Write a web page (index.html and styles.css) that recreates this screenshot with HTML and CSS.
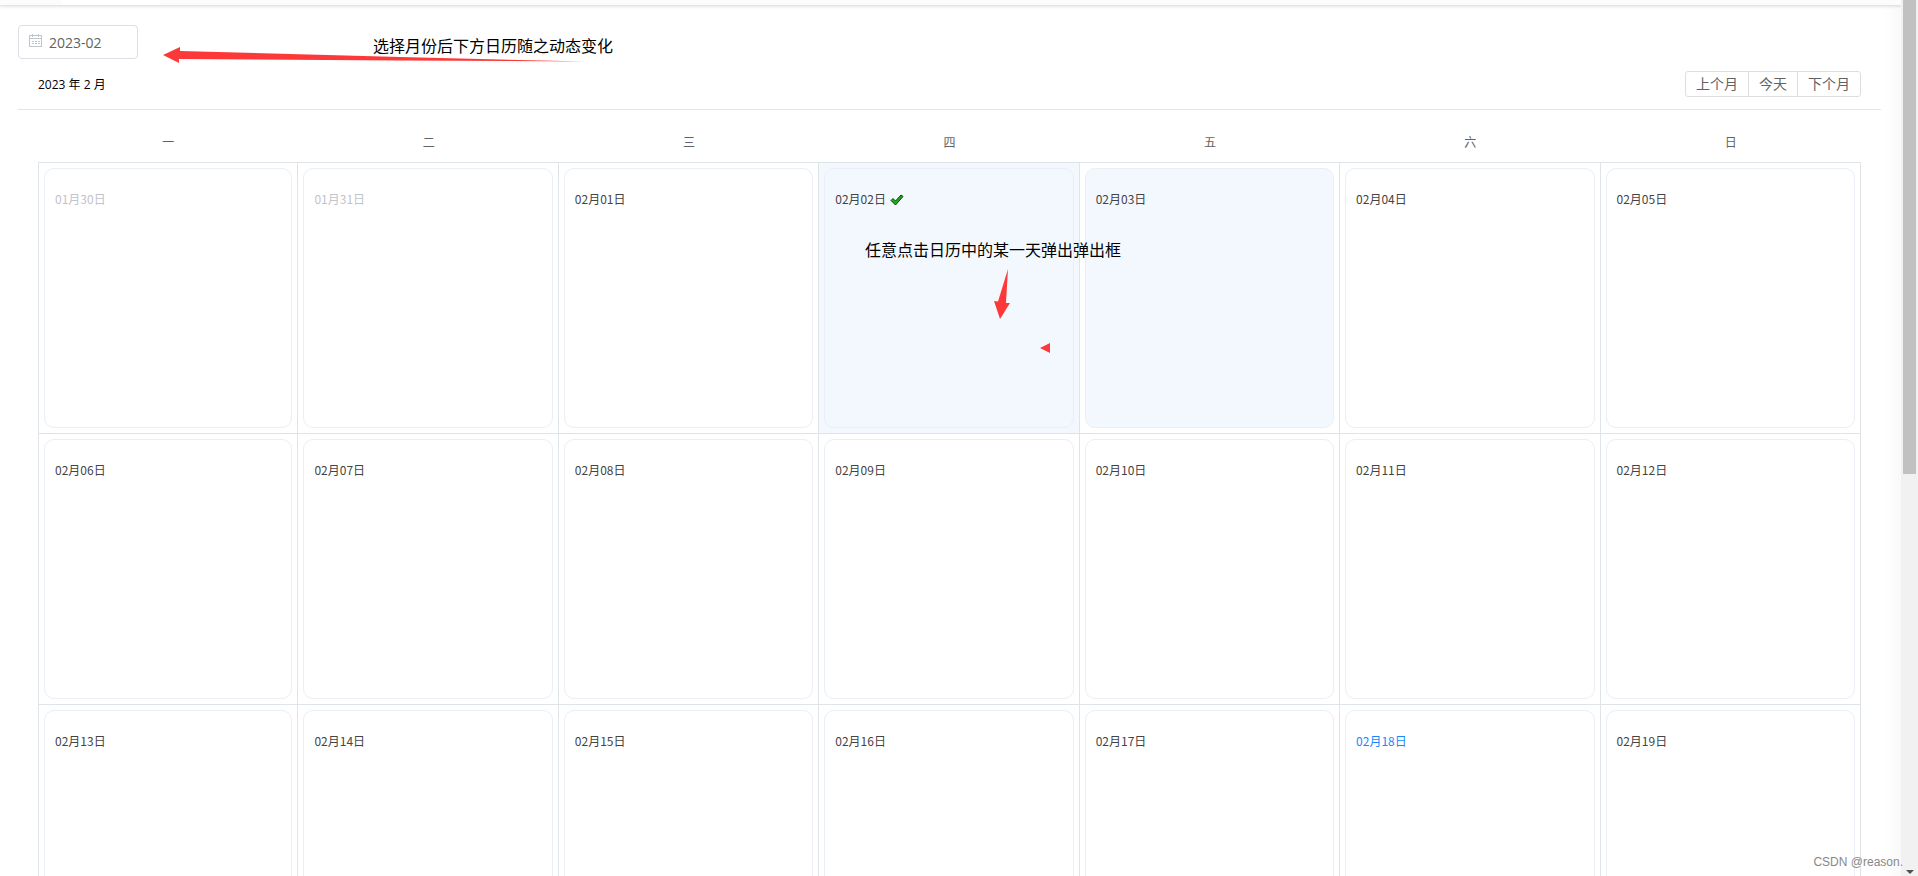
FILE: index.html
```html
<!DOCTYPE html>
<html lang="zh-CN">
<head>
<meta charset="utf-8">
<title>日历</title>
<link rel="stylesheet" href="styles.css">
</head>
<body>
<div class="app">
  <div class="view">
    <div class="tabs-bar"><span class="tab"></span></div>
    <main class="content">
      <label class="month-picker">
        <svg class="picker-icon" viewBox="0 0 14 14" width="14" height="14" fill="none" stroke="#c0c4cc" shape-rendering="crispEdges" aria-hidden="true">
          <path d="M.5 1.500h12v11H.5zM1 4.500h11M3.500 0v3M9.500 0v3"/>
          <path d="M3 7.500h2M6 7.500h2M9 7.500h2M3 9.500h2M6 9.500h2M9 9.500h2"/>
        </svg>
        <input class="picker-input" type="text" value="2023-02" aria-label="选择月份">
      </label>
      <section class="calendar">
        <header class="calendar-header">
          <h1 class="calendar-title">2023 年 2 月</h1>
          <div class="button-group">
            <button class="button" type="button">上个月</button>
            <button class="button" type="button">今天</button>
            <button class="button" type="button">下个月</button>
          </div>
        </header>
        <div class="calendar-body">
          <table class="calendar-table">
            <thead>
              <tr><th>一</th><th>二</th><th>三</th><th>四</th><th>五</th><th>六</th><th>日</th></tr>
            </thead>
            <tbody>
              <tr>
                <td><div class="day other">01月30日</div></td>
                <td><div class="day other">01月31日</div></td>
                <td><div class="day">02月01日</div></td>
                <td class="selected"><div class="day">02月02日
                  <svg class="check" viewBox="0 0 14 12" width="14" height="12" aria-label="已选"><path d="M1 6.500 3 4.500 5.500 7 11 1l2 1.500L5.500 11z" fill="#14b014" stroke="#1c3a1c" stroke-linejoin="round"/></svg></div></td>
                <td><div class="day hover">02月03日</div></td>
                <td><div class="day">02月04日</div></td>
                <td><div class="day">02月05日</div></td>
              </tr>
              <tr>
                <td><div class="day">02月06日</div></td>
                <td><div class="day">02月07日</div></td>
                <td><div class="day">02月08日</div></td>
                <td><div class="day">02月09日</div></td>
                <td><div class="day">02月10日</div></td>
                <td><div class="day">02月11日</div></td>
                <td><div class="day">02月12日</div></td>
              </tr>
              <tr>
                <td><div class="day">02月13日</div></td>
                <td><div class="day">02月14日</div></td>
                <td><div class="day">02月15日</div></td>
                <td><div class="day">02月16日</div></td>
                <td><div class="day">02月17日</div></td>
                <td><div class="day today">02月18日</div></td>
                <td><div class="day">02月19日</div></td>
              </tr>
            </tbody>
          </table>
        </div>
      </section>
    </main>
  </div>
  <div class="scrollbar" aria-hidden="true">
    <div class="scrollbar-thumb"></div>
    <svg width="8" height="4" viewBox="0 0 8 4"><path d="M0 0h8L4 4z" fill="#505050"/></svg>
  </div>
  <p class="note note-month">选择月份后下方日历随之动态变化</p>
  <p class="note note-day">任意点击日历中的某一天弹出弹出框</p>
  <svg class="arrows" width="1100" height="380" viewBox="0 0 1100 380" fill="#fd3838" aria-hidden="true">
    <path d="M163 55 180 47V51L400 57 585 61.500 400 60.500 179 59V63z"/>
    <path d="M1008 269 1006 303 1010 303 1000 319 994 301 998 301.500z"/>
    <path d="M1040 348 1050 343V353z"/>
  </svg>
  <p class="watermark">CSDN @reason.</p>
</div>
</body>
</html>
```
FILE: styles.css
```css
* { box-sizing: border-box; }
body {
  margin: 0;
  font-family: "Open Sans", "Noto Sans CJK SC", sans-serif;
  font-size: 12px;
  color: #333;
  background: #fff;
}
.app {
  position: relative;
  display: flex;
  height: 100vh;
  overflow: hidden;
}
.view {
  flex: 1;
  min-width: 0;
  overflow: hidden;
  background: linear-gradient(to left, #f9f9f9, #fff 16px);
}
.tabs-bar {
  height: 6px;
  padding-left: 62px;
  background: #fcfcfc;
  border-bottom: 1px solid #e4e4e4;
  box-shadow: 0 1px 3px rgba(0, 0, 0, 0.1);
}
.tab {
  display: block;
  width: 98px;
  height: 5px;
  background: #fff;
}
.content { padding: 19px 20px 0 18px; }
.month-picker {
  display: flex;
  align-items: center;
  gap: 6px;
  width: 120px;
  height: 34px;
  padding: 0 10px;
  border: 1px solid #dcdfe6;
  border-radius: 4px;
  background: #fff;
}
.picker-icon { flex: none; margin-bottom: 2px; }
.picker-input {
  width: 100%;
  min-width: 0;
  padding: 0;
  border: 0;
  outline: 0;
  background: none;
  font: inherit;
  font-size: 14px;
  color: #606266;
}
.calendar-header {
  display: flex;
  justify-content: space-between;
  align-items: center;
  padding: 12px 20px;
  border-bottom: 1px solid #e2e5e9;
}
.calendar-title {
  margin: 0;
  font-size: 12px;
  font-weight: 400;
  color: #000;
}
.button-group { display: flex; }
.button {
  height: 26px;
  padding: 0 10px;
  border: 1px solid #dcdddf;
  background: #fff;
  font: inherit;
  font-size: 14px;
  line-height: 20px;
  color: #606266;
}
.button + .button { margin-left: -1px; }
.button:first-child { border-radius: 3px 0 0 3px; }
.button:last-child { border-radius: 0 3px 3px 0; }
.calendar-body { padding: 12px 20px 35px; }
.calendar-table {
  width: 100%;
  table-layout: fixed;
  border-collapse: separate;
  border-spacing: 0;
}
.calendar-table th {
  height: 40px;
  padding: 0;
  font-weight: 400;
  color: #606266;
}
.calendar-table td {
  padding: 5px;
  border-right: 1px solid #dfe4e9;
  border-bottom: 1px solid #dfe4e9;
}
.calendar-table td:first-child { border-left: 1px solid #dfe4e9; }
.calendar-table tbody tr:first-child td { border-top: 1px solid #dfe4e9; }
.calendar-table .selected { background: #f2f8fe; }
.day {
  height: 260px;
  padding: 20px 10px;
  border: 1px solid #ebeef5;
  border-radius: 10px;
  font-family: "Noto Sans CJK SC", sans-serif;
  line-height: 20px;
  color: #444;
}
.day.other { color: #c0c4cc; }
.day.today { color: #1989fa; }
.day.hover { background: #f2f8fe; }
.check { margin-left: 1px; vertical-align: -2px; }
.scrollbar {
  display: flex;
  flex-direction: column;
  align-items: center;
  justify-content: space-between;
  width: 17px;
  padding-bottom: 2px;
  background: #f1f1f1;
}
.scrollbar-thumb {
  width: 13px;
  height: 54.2%;
  background: #c1c1c1;
}
.note {
  position: absolute;
  margin: 0;
  font-family: "Noto Sans CJK SC", sans-serif;
  font-size: 16px;
  line-height: 24px;
  white-space: nowrap;
  color: #000;
}
.note-month { left: 373px; top: 33px; }
.note-day { left: 865px; top: 237px; }
.arrows {
  position: absolute;
  left: 0;
  top: 0;
  pointer-events: none;
}
.watermark {
  position: absolute;
  right: 15px;
  bottom: 6px;
  margin: 0;
  font-family: "Liberation Sans", sans-serif;
  font-size: 12px;
  line-height: 16px;
  color: #888;
}
```
